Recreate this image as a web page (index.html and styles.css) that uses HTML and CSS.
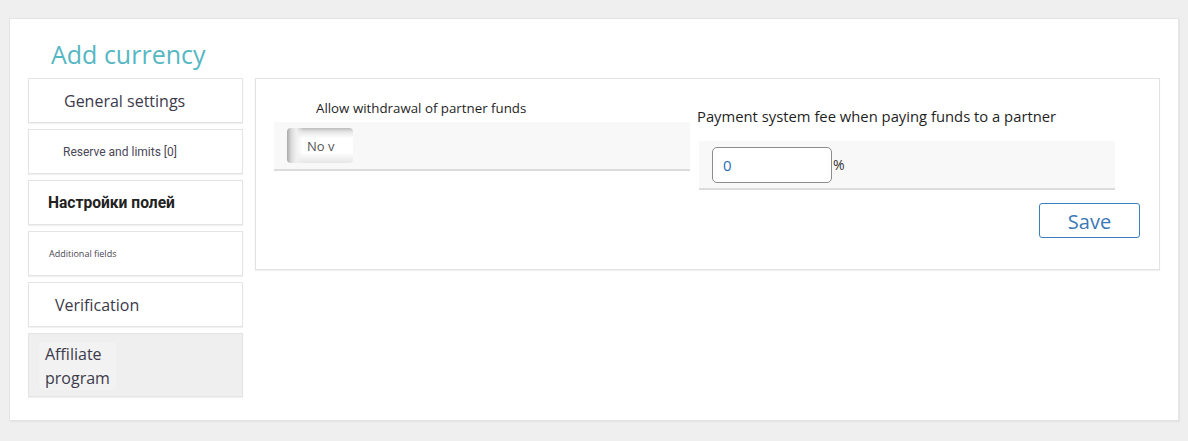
FILE: index.html
```html
<!DOCTYPE html>
<html lang="en">
<head>
<meta charset="utf-8">
<title>Add currency</title>
<link rel="stylesheet" href="styles.css">
</head>
<body>
<div class="card">
  <h1 class="title">Add currency</h1>
  <div class="layout">
    <nav class="sidebar">
      <div class="nav-item nav-general">General settings</div>
      <div class="nav-item nav-reserve">Reserve and limits [0]</div>
      <div class="nav-item nav-fields">Настройки полей</div>
      <div class="nav-item nav-additional">Additional fields</div>
      <div class="nav-item nav-verification">Verification</div>
      <div class="nav-item nav-affiliate"><span class="aff-text">Affiliate<br>program</span></div>
    </nav>
    <section class="panel">
      <div class="fields">
        <div class="field field-left">
          <div class="label label-left">Allow withdrawal of partner funds</div>
          <div class="row">
            <div class="select">No v</div>
          </div>
        </div>
        <div class="field field-right">
          <div class="label label-right">Payment system fee when paying funds to a partner</div>
          <div class="row row-right">
            <div class="input">0</div>
            <span class="percent">%</span>
          </div>
        </div>
      </div>
      <div class="actions">
        <button class="save" type="button">Save</button>
      </div>
    </section>
  </div>
</div>
</body>
</html>
```

FILE: styles.css
```css
html, body {
  margin: 0;
  padding: 0;
}
body {
  background: #efefef;
  font-family: "Open Sans", "Noto Sans", sans-serif;
  color: #3d3a4b;
  width: 1188px;
  height: 441px;
  overflow: hidden;
}
.card {
  margin: 18px 0 0 9px;
  width: 1170px;
  height: 403px;
  box-sizing: border-box;
  background: #fff;
  border: 1px solid #e4e4e4;
  box-shadow: 1px 1px 1px rgba(0,0,0,0.04);
  padding: 0 18px 0 18px;
}
.title {
  margin: 0;
  height: 59px;
  box-sizing: border-box;
  padding: 17px 0 0 23px;
  font-weight: 400;
  font-size: 25px;
  line-height: 36px;
  color: #55b7c3;
}
.layout {
  display: flex;
  gap: 12px;
  align-items: flex-start;
}
.sidebar {
  width: 215px;
  display: flex;
  flex-direction: column;
  gap: 6px;
}
.nav-item {
  box-sizing: border-box;
  height: 45px;
  border: 1px solid #e4e4e4;
  box-shadow: 0 1px 1px rgba(0,0,0,0.06);
  display: flex;
  align-items: center;
  background: #fff;
}
.nav-general {
  padding-left: 35px;
  font-size: 16px;
}
.nav-reserve {
  padding-left: 34px;
  font-family: Roboto, sans-serif;
  font-size: 12px;
  color: #4a4856;
}
.nav-fields {
  padding-left: 19px;
  font-family: Roboto, sans-serif;
  font-weight: 700;
  font-size: 15.6px;
  color: #222;
}
.nav-additional {
  padding-left: 20px;
  font-size: 9px;
  color: #4a4656;
}
.nav-verification {
  padding-left: 26px;
  font-size: 16px;
}
.nav-affiliate {
  height: 64px;
  align-items: flex-start;
  padding: 8px 0 0 10px;
  background: #efefef;
  font-size: 16px;
  line-height: 24px;
}
.aff-text {
  display: block;
  padding: 0 6px;
  background: linear-gradient(#f2f2f2, #f2f2f2) 0 0 / 117px 24px no-repeat,
              linear-gradient(#f2f2f2, #f2f2f2) 0 24px / 104px 24px no-repeat;
  border-radius: 4px;
}
.panel {
  flex: 1;
  box-sizing: border-box;
  height: 192px;
  border: 1px solid #e2e2e2;
  box-shadow: 0 1px 1px rgba(0,0,0,0.05);
  padding: 0 18px 0 18px;
  display: flex;
  flex-direction: column;
}
.fields {
  display: flex;
  gap: 7px;
}
.field {
  width: 416px;
}
.field-left {
  padding-top: 20px;
}
.field-right {
  width: 418px;
  padding-top: 27px;
}
.label {
  font-size: 13.3px;
  line-height: 18px;
  color: #1f1f1f;
}
.label-left {
  padding-left: 42px;
  margin-bottom: 5px;
}
.label-right {
  font-size: 14.8px;
  line-height: 20px;
  margin-bottom: 15px;
}
.row {
  box-sizing: border-box;
  height: 49px;
  background: #f8f8f8;
  border-bottom: 2px solid #dcdcdc;
  display: flex;
  align-items: flex-start;
  padding: 6px 0 0 13px;
}
.row-right {
  margin-left: 2px;
}
.select {
  box-sizing: border-box;
  width: 66px;
  height: 35px;
  border-radius: 4px;
  padding: 9px 0 0 20px;
  font-size: 13px;
  line-height: 18px;
  color: #555;
  background:
    linear-gradient(to right, #a8a8a8 0, #d8d8d8 4px, #f0f0f0 9px, rgba(255,255,255,0) 16px),
    linear-gradient(to bottom, #bdbdbd 0, #e6e6e6 4px, #fff 10px, #fff 70%, #e6e6e6 100%);
}
.input {
  box-sizing: border-box;
  width: 120px;
  height: 36px;
  border: 1px solid #8c8c8c;
  border-radius: 5px;
  background: #fff;
  padding: 7px 0 0 10px;
  font-size: 15px;
  line-height: 20px;
  color: #2c6db8;
}
.percent {
  margin-top: 9px;
  margin-left: 1px;
  font-size: 14px;
  line-height: 18px;
  color: #333;
}
.actions {
  display: flex;
  justify-content: flex-end;
  padding-top: 13px;
  padding-right: 1px;
}
.save {
  box-sizing: border-box;
  width: 101px;
  height: 35px;
  background: #fff;
  border: 1px solid #3a7fc0;
  border-radius: 3px;
  font-family: "Open Sans", sans-serif;
  font-size: 20px;
  line-height: 26px;
  color: #3b78b5;
  padding: 3px 0 0 0;
}
```
